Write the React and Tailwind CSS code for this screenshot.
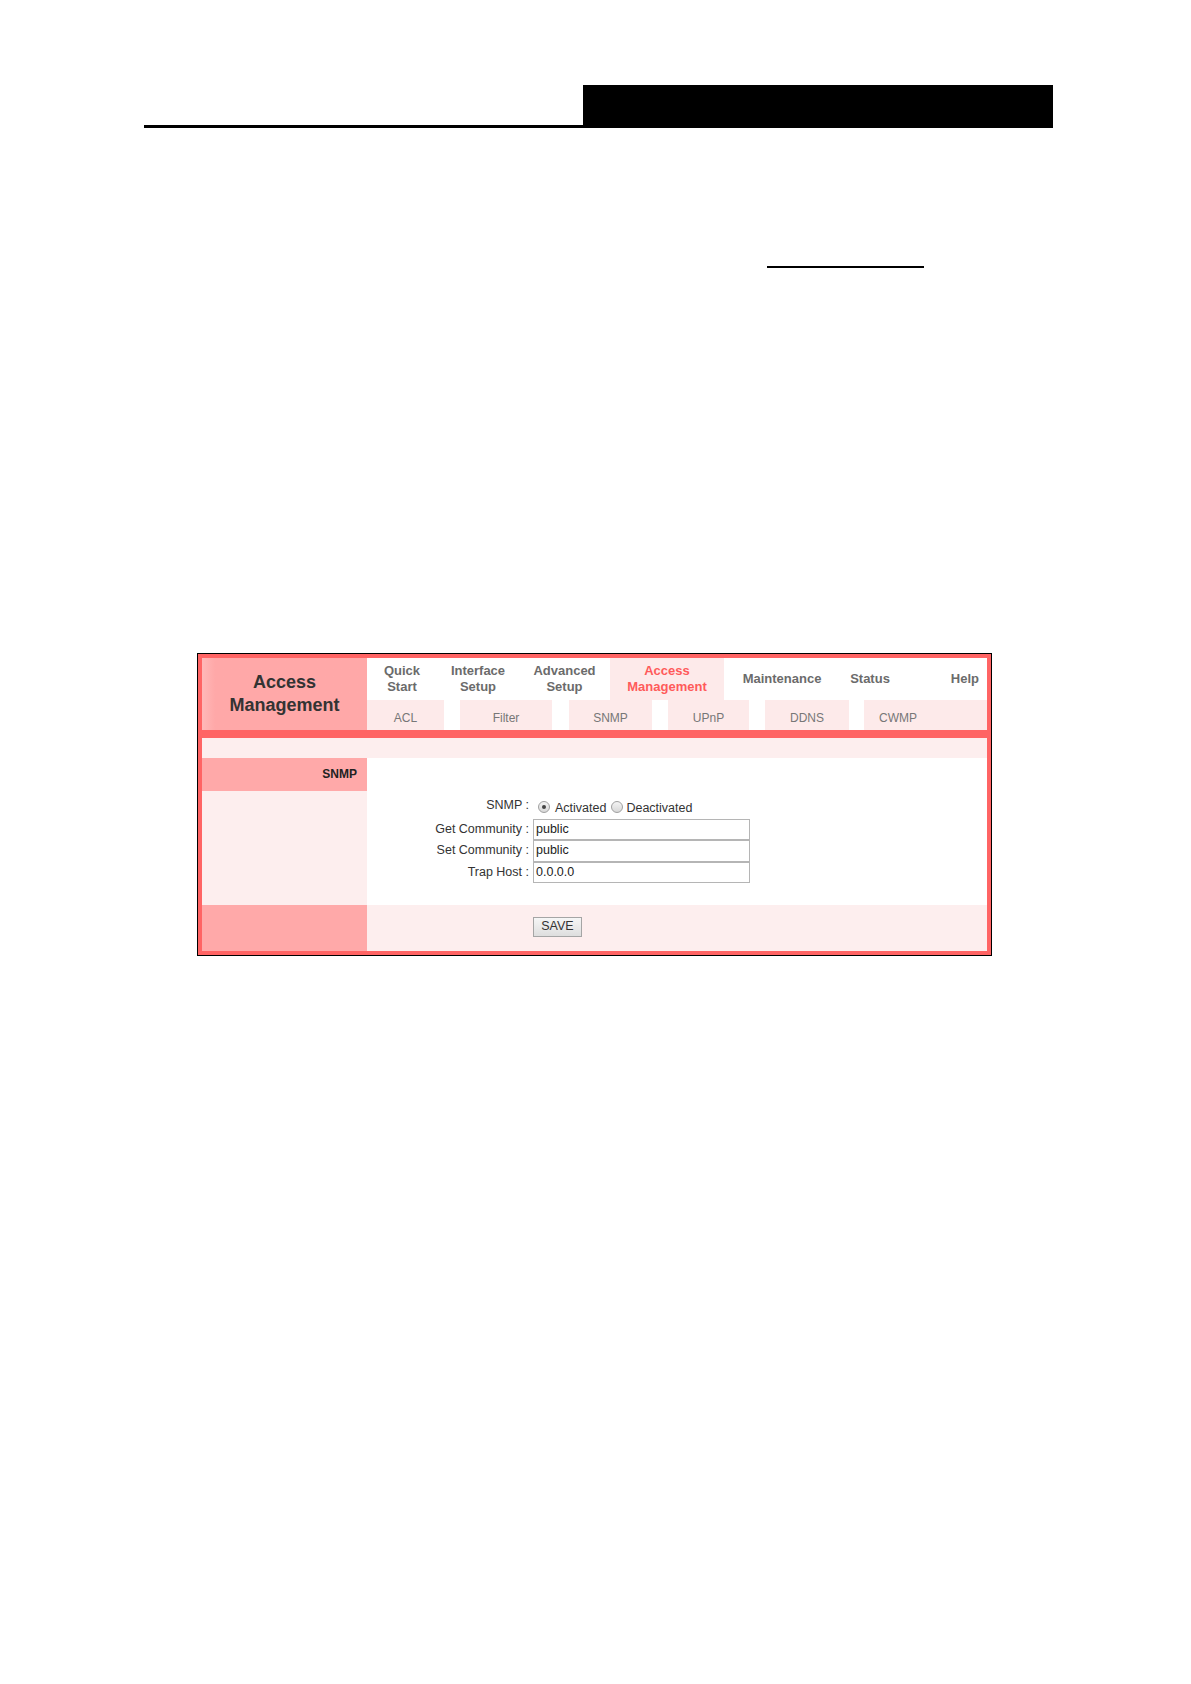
import React from 'react';

const tabs = [
  { label: ['Quick', 'Start'], w: 'w-[70px]' },
  { label: ['Interface', 'Setup'], w: 'w-[82px]' },
  { label: ['Advanced', 'Setup'], w: 'w-[91px]' },
  { label: ['Access', 'Management'], w: 'w-[114px]', active: true },
  { label: ['Maintenance'], w: 'w-[116px]' },
  { label: ['Status'], w: 'w-[60px]' },
];

const subs = [
  { label: 'ACL', w: 'w-[77px]' },
  { gap: true, w: 'w-[16px]' },
  { label: 'Filter', w: 'w-[92px]' },
  { gap: true, w: 'w-[17px]' },
  { label: 'SNMP', w: 'w-[83px]' },
  { gap: true, w: 'w-[16px]' },
  { label: 'UPnP', w: 'w-[81px]' },
  { gap: true, w: 'w-[16px]' },
  { label: 'DDNS', w: 'w-[84px]' },
  { gap: true, w: 'w-[15px]' },
  { label: 'CWMP', w: 'w-[68px]' },
];

const Radio = ({ checked }) => (
  <span className="relative inline-block h-[12px] w-[12px] -translate-y-[1px] rounded-full border border-[#a0a0a0] bg-gradient-to-b from-[#f4f4f4] to-[#d8d8d8]">
    {checked && (
      <span className="absolute left-[3px] top-[3px] h-[4px] w-[4px] rounded-full bg-[#444]" />
    )}
  </span>
);

const Field = ({ label, value }) => (
  <div className="flex h-[21.5px] items-center">
    <div className="w-[162px] text-right">{label} :</div>
    <div className="ml-[4px] flex h-[21.5px] w-[217px] items-center border border-[#b5b5b5] bg-white pl-[2px] text-[#222]">
      {value}
    </div>
  </div>
);

export default function App() {
  return (
    <div className="min-h-[1684px] w-[1191px] bg-white font-['Liberation_Sans',Arial,sans-serif]">
      {/* page header */}
      <div className="flex pl-[144px] pt-[85px]">
        <div className="w-[439px] self-end border-b-[3px] border-black" />
        <div className="h-[43px] w-[470px] bg-black" />
      </div>
      <div className="ml-[767px] mt-[138px] h-[1.5px] w-[157px] bg-black" />

      {/* router screenshot */}
      <div className="ml-[197px] mt-[385px] w-[795px] border border-black">
        <div className="border-4 border-[#ff6464]">
          <div className="flex h-[72px]">
            <div className="flex w-[165px] items-center justify-center bg-gradient-to-r from-[#ffb8b8] to-[#ffa8a8] to-[8%] text-center text-[18px] font-bold leading-[23px] text-[#333]">
              Access
              <br />
              Management
            </div>
            <div className="flex flex-1 flex-col">
              <div className="flex h-[42px] bg-white text-[13px] font-bold leading-[16px] text-[#6b6b6b]">
                {tabs.map((t) => (
                  <div
                    key={t.label.join(' ')}
                    className={`${t.w} flex flex-col items-center justify-center ${
                      t.active ? 'bg-[#fdeaea] text-[#ff5a5a]' : ''
                    }`}
                  >
                    {t.label.map((l) => (
                      <span key={l}>{l}</span>
                    ))}
                  </div>
                ))}
                <div className="flex flex-1 items-center justify-end pr-[8px]">Help</div>
              </div>
              <div className="flex h-[30px] bg-[#fdeaea] text-[12px] text-[#777]">
                {subs.map((s, i) =>
                  s.gap ? (
                    <div key={i} className={`${s.w} bg-white`} />
                  ) : (
                    <div key={i} className={`${s.w} flex items-center justify-center pt-[6px]`}>
                      {s.label}
                    </div>
                  )
                )}
                <div className="flex-1" />
              </div>
            </div>
          </div>
          <div className="h-[8px] bg-[#ff6464]" />
          <div className="h-[20px] bg-[#fdeeee]" />

          <div className="flex h-[147px]">
            <div className="flex w-[165px] flex-col">
              <div className="flex h-[33px] items-center justify-end bg-[#ffa9a9] pr-[10px] text-[12px] font-bold text-[#222]">
                SNMP
              </div>
              <div className="flex-1 bg-[#fdeeee]" />
            </div>
            <div className="flex-1 bg-white pt-[39px] text-[12.5px] text-[#333]">
              <div className="flex h-[22px] items-center">
                <div className="w-[162px] -translate-y-[2px] text-right">SNMP :</div>
                <div className="ml-[9px] flex items-center">
                  <Radio checked />
                  <span className="ml-[5px] mr-[5px] translate-y-[1px]">Activated</span>
                  <Radio />
                  <span className="ml-[3px] translate-y-[1px]">Deactivated</span>
                </div>
              </div>
              <Field label="Get Community" value="public" />
              <Field label="Set Community" value="public" />
              <Field label="Trap Host" value="0.0.0.0" />
            </div>
          </div>

          <div className="flex h-[46px]">
            <div className="w-[165px] bg-[#ffa9a9]" />
            <div className="flex-1 bg-[#fdeeee] pl-[166px] pt-[12px]">
              <button className="flex h-[20px] w-[49px] items-center justify-center border border-[#a5a5a5] bg-gradient-to-b from-[#f6f6f6] to-[#dedede] text-[12.5px] text-[#333]">
                SAVE
              </button>
            </div>
          </div>
        </div>
      </div>
    </div>
  );
}
